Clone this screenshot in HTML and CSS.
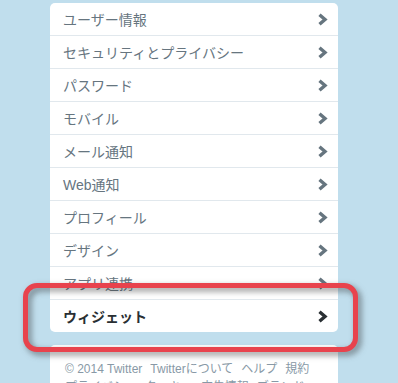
FILE: index.html
```html
<!DOCTYPE html>
<html lang="ja">
<head>
  <meta charset="UTF-8">
  <title>設定</title>
  <link rel="stylesheet" href="styles.css">
</head>
<body>
  <div class="page">
    <ul class="menu">
      <li class="item"><span>ユーザー情報</span><svg class="chev" viewBox="0 0 11 13"><path d="M2.5 1.8 L8 6.5 L2.5 11.2"/></svg></li>
      <li class="item"><span>セキュリティとプライバシー</span><svg class="chev" viewBox="0 0 11 13"><path d="M2.5 1.8 L8 6.5 L2.5 11.2"/></svg></li>
      <li class="item"><span>パスワード</span><svg class="chev" viewBox="0 0 11 13"><path d="M2.5 1.8 L8 6.5 L2.5 11.2"/></svg></li>
      <li class="item"><span>モバイル</span><svg class="chev" viewBox="0 0 11 13"><path d="M2.5 1.8 L8 6.5 L2.5 11.2"/></svg></li>
      <li class="item"><span>メール通知</span><svg class="chev" viewBox="0 0 11 13"><path d="M2.5 1.8 L8 6.5 L2.5 11.2"/></svg></li>
      <li class="item"><span>Web通知</span><svg class="chev" viewBox="0 0 11 13"><path d="M2.5 1.8 L8 6.5 L2.5 11.2"/></svg></li>
      <li class="item"><span>プロフィール</span><svg class="chev" viewBox="0 0 11 13"><path d="M2.5 1.8 L8 6.5 L2.5 11.2"/></svg></li>
      <li class="item"><span>デザイン</span><svg class="chev" viewBox="0 0 11 13"><path d="M2.5 1.8 L8 6.5 L2.5 11.2"/></svg></li>
      <li class="item"><span>アプリ連携</span><svg class="chev" viewBox="0 0 11 13"><path d="M2.5 1.8 L8 6.5 L2.5 11.2"/></svg></li>
      <li class="item active"><span>ウィジェット</span><svg class="chev" viewBox="0 0 11 13"><path d="M2.5 1.8 L8 6.5 L2.5 11.2"/></svg></li>
    </ul>

    <div class="footer">
      <div class="links">
        <span>© 2014 Twitter</span>
        <a href="#">Twitterについて</a>
        <a href="#">ヘルプ</a>
        <a href="#">規約</a>
        <a href="#">プライバシー</a>
        <a href="#">クッキー</a>
        <a href="#">広告情報</a>
        <a href="#">ブランド</a>
      </div>
    </div>
  </div>

  <div class="highlight"></div>
</body>
</html>
```

FILE: styles.css
```css
body {
  margin: 0;
  background-color: #c0deed;
  font-family: "Liberation Sans", "Noto Sans CJK JP", sans-serif;
  height: 383px;
  overflow: hidden;
}

.page {
  width: 288px;
  margin-left: 50px;
  padding-top: 3px;
}

.menu {
  list-style: none;
  margin: 0;
  padding: 0;
  background-color: white;
  border-radius: 5px;
}

.item {
  display: flex;
  align-items: center;
  justify-content: space-between;
  height: 32px;
  padding: 0 10px 0 13px;
  border-bottom: 1px solid #e1e8ed;
  font-size: 14px;
  color: #66757f;
}

.item:last-child {
  border-bottom: none;
}

.chev {
  width: 11px;
  height: 13px;
}

.chev path {
  fill: none;
  stroke: #66757f;
  stroke-width: 3.4;
}

.active {
  color: #292f33;
  font-weight: bold;
}

.active .chev path {
  stroke: #292f33;
}

.footer {
  margin-top: 13px;
  background-color: white;
  border-radius: 5px 5px 0 0;
  padding: 15px 15px 0 15px;
  height: 60px;
}

.links {
  display: flex;
  flex-wrap: wrap;
  column-gap: 8px;
  font-size: 12px;
  line-height: 18px;
  color: #8899a6;
}

.links a {
  color: #8899a6;
  text-decoration: none;
}

.highlight {
  position: absolute;
  left: 23px;
  top: 283px;
  width: 325px;
  height: 59px;
  border: 5px solid #e8434d;
  border-radius: 14px;
  filter: drop-shadow(3px 3px 3px rgba(40, 40, 40, 0.55));
}
```
